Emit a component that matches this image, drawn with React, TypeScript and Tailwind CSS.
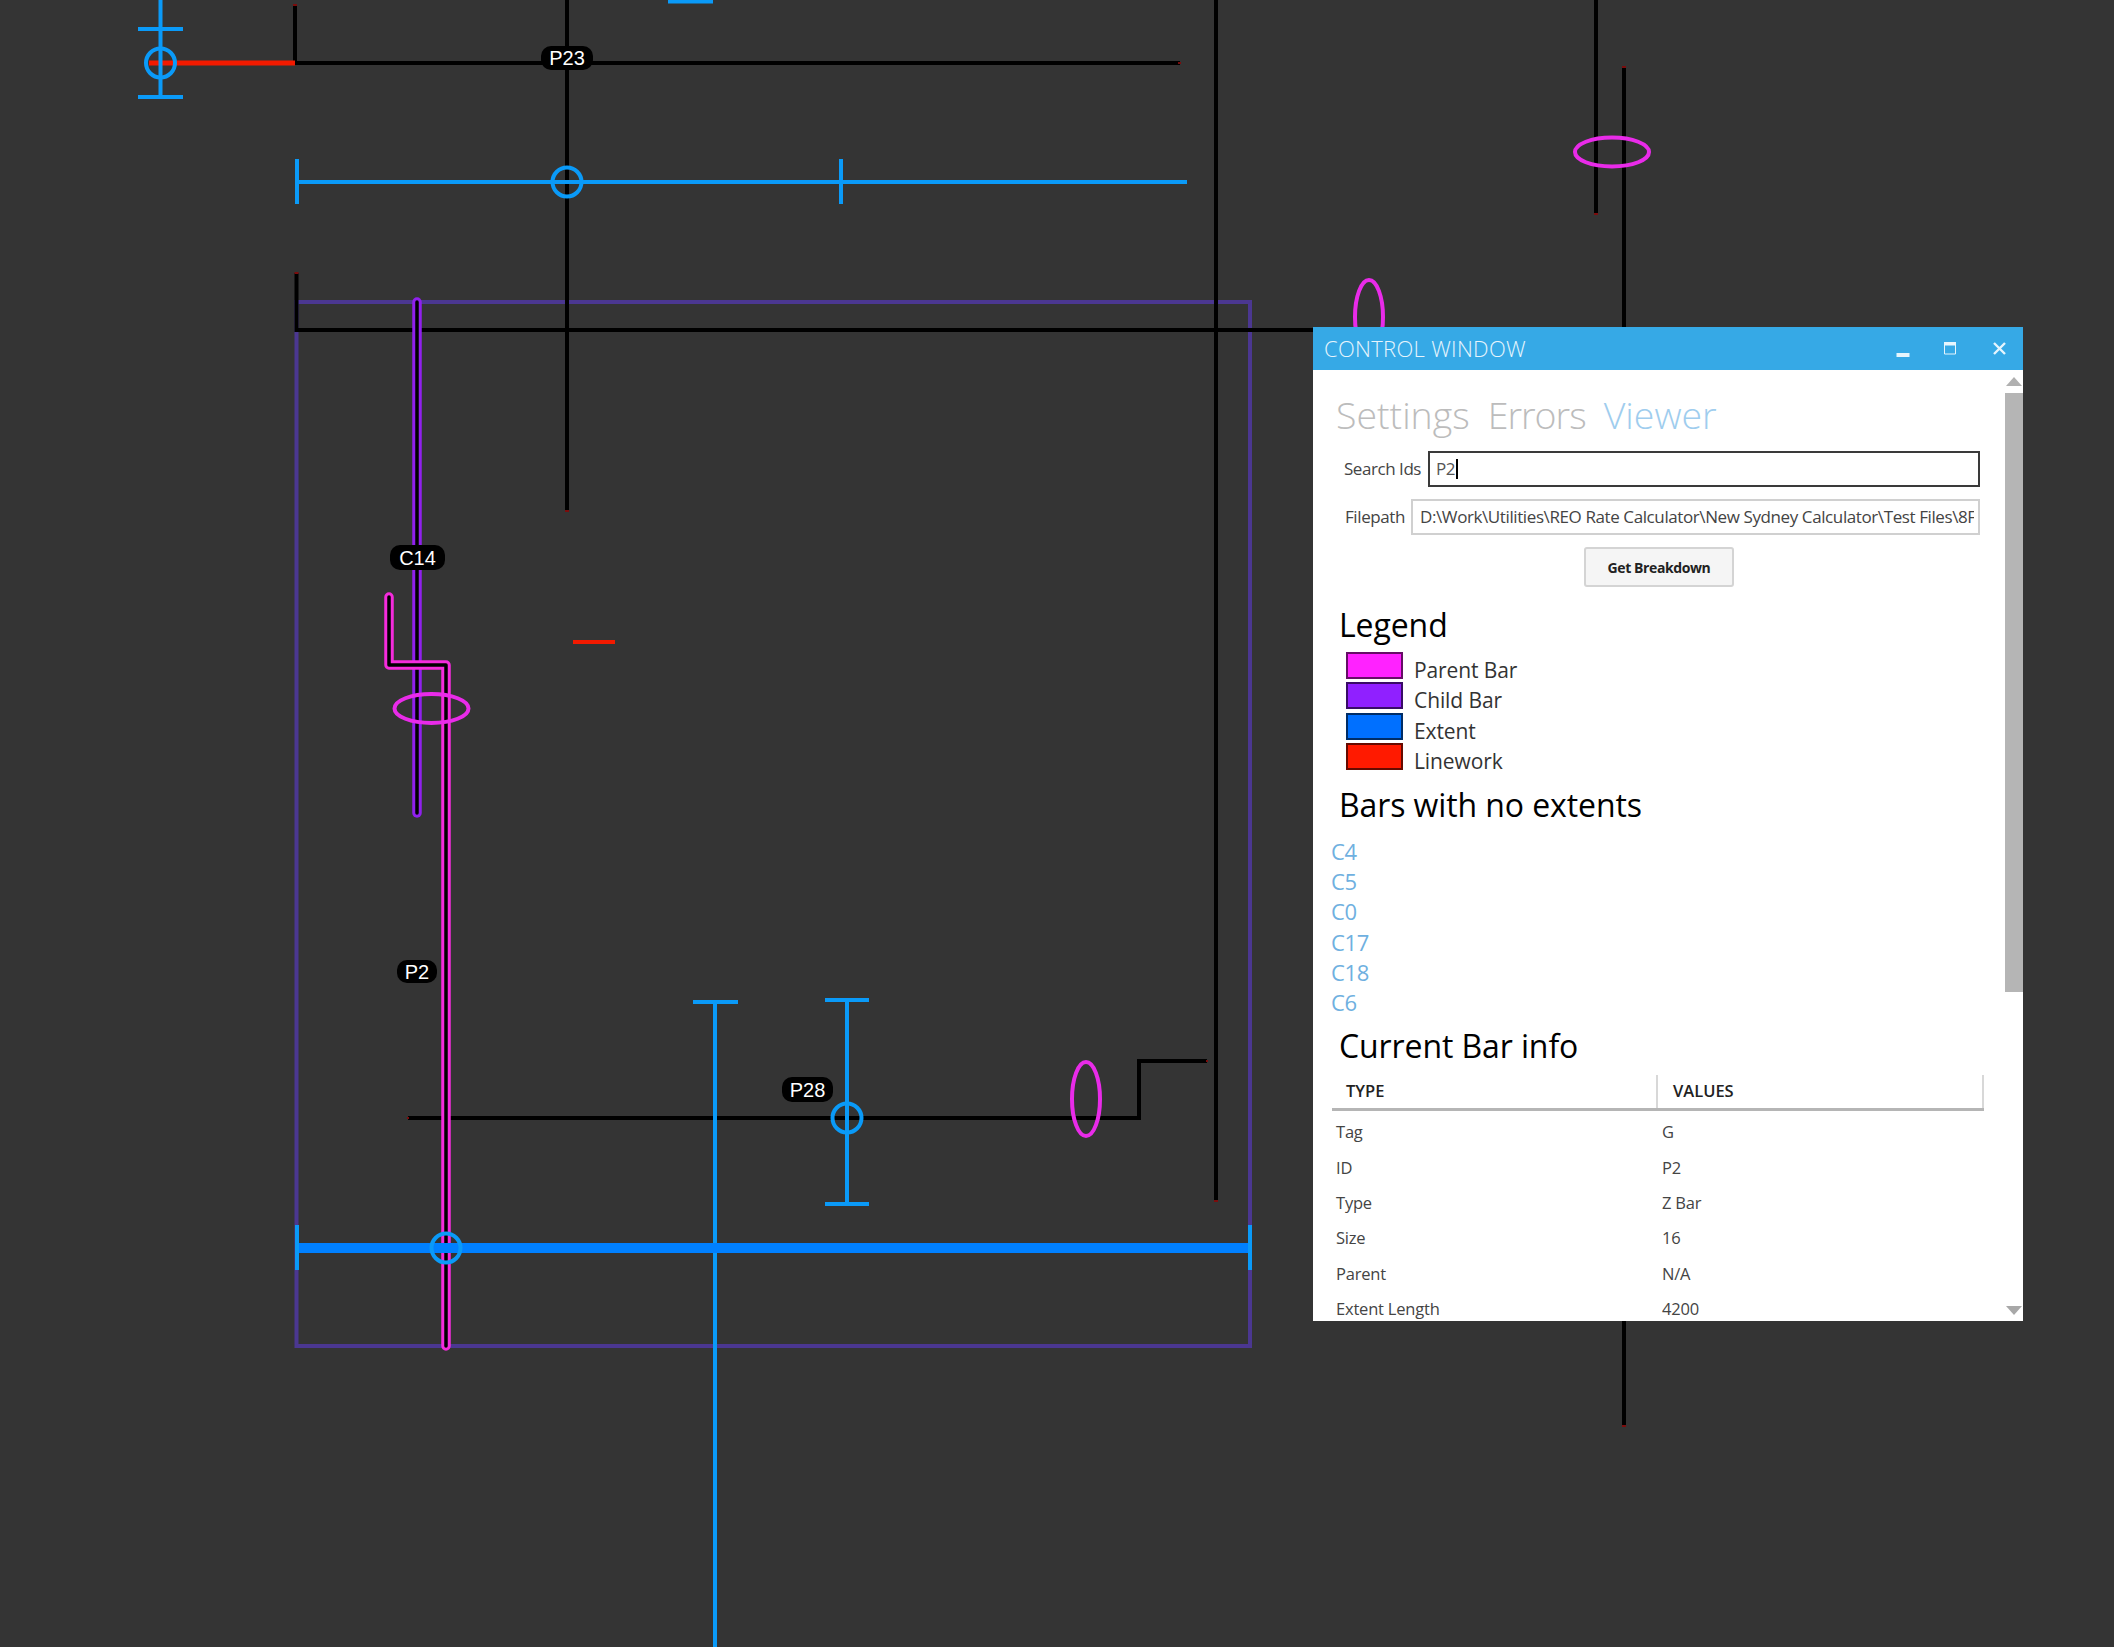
const FILE_PATH = 'D:\\Work\\Utilities\\REO Rate Calculator\\New Sydney Calculator\\Test Files\\8F';

const LEGEND = [
  { name: 'Parent Bar', swatch: 'bg-[#ff22ff]' },
  { name: 'Child Bar', swatch: 'bg-[#9020ff]' },
  { name: 'Extent', swatch: 'bg-[#0070ff]' },
  { name: 'Linework', swatch: 'bg-[#ff1a00]' },
];

const NO_EXTENTS = ['C4', 'C5', 'C0', 'C17', 'C18', 'C6'];

const BAR_INFO = [
  ['Tag', 'G'],
  ['ID', 'P2'],
  ['Type', 'Z Bar'],
  ['Size', '16'],
  ['Parent', 'N/A'],
  ['Extent Length', '4200'],
];

const BLUE = '#0a9af8';
const MAGENTA = '#e92be9';

function Drawing() {
  return (
    <svg className="absolute inset-0" width="2114" height="1647" viewBox="0 0 2114 1647" fill="none">
      {/* slab outline */}
      <rect x="296.5" y="302" width="953.5" height="1044" stroke="#4b3791" strokeWidth="4" />

      {/* linework */}
      <g stroke="#000" strokeWidth="4">
        <path d="M295 5V63H1180" />
        <path d="M567 0V511" />
        <path d="M296.5 273V330H1320" />
        <path d="M1216 0V1201" />
        <path d="M1596 0V214" />
        <path d="M1624 67V1426" />
        <path d="M408 1118H1139V1061H1207" />
      </g>
      <g fill="#7a0d0d">
        <rect x="293" y="4" width="4" height="2" />
        <rect x="294.5" y="272" width="4" height="2" />
        <rect x="565" y="510" width="4" height="2" />
        <rect x="1214" y="1200" width="4" height="2" />
        <rect x="1594" y="213" width="4" height="2" />
        <rect x="1622" y="66" width="4" height="2" />
        <rect x="1622" y="1425" width="4" height="2" />
        <rect x="1178" y="62" width="3" height="2" />
        <rect x="407" y="1117" width="2" height="2" />
        <rect x="1206" y="1060" width="2" height="2" />
      </g>

      {/* red linework */}
      <path d="M149 63H295" stroke="#f21a00" strokeWidth="5" />
      <path d="M573 642H615" stroke="#f21a00" strokeWidth="4" />

      {/* child bar */}
      <path d="M417 302V813" stroke="#9020ee" strokeWidth="9.5" strokeLinecap="round" />
      <path d="M417 302V813" stroke="#000" strokeWidth="3.5" strokeLinecap="round" />

      {/* parent bar */}
      <path d="M389 597V665H446V1346" stroke="#f52bdc" strokeWidth="9.5" strokeLinecap="round" strokeLinejoin="round" />
      <path d="M389 597V665H446V1346" stroke="#000" strokeWidth="3.5" strokeLinecap="round" strokeLinejoin="round" />

      {/* extents */}
      <g stroke={BLUE} strokeWidth="4">
        <path d="M160.5 0V97" />
        <path d="M138 29H183M138 97H183" />
        <path d="M297 182H1187" />
        <path d="M297 159V204M841 159V204" />
        <path d="M715 1002V1647" />
        <path d="M693 1002H738" />
        <path d="M847 1000V1204" />
        <path d="M825 1000H869M825 1204H869" />
      </g>
      <path d="M668 1.5H713" stroke={BLUE} strokeWidth="4" />
      <path d="M296 1248H1251" stroke="#0080ff" strokeWidth="10" />
      <path d="M297 1225V1270M1250 1225V1270" stroke={BLUE} strokeWidth="4" />

      <g stroke={BLUE} strokeWidth="4">
        <circle cx="160.5" cy="63" r="14.5" />
        <circle cx="567" cy="182" r="14.5" />
        <circle cx="847" cy="1118" r="14.5" />
        <circle cx="446" cy="1248" r="14.5" />
      </g>

      {/* laps */}
      <g stroke={MAGENTA} strokeWidth="4">
        <ellipse cx="431.5" cy="708.5" rx="37" ry="14.5" />
        <ellipse cx="1612" cy="152" rx="37" ry="14.5" />
        <ellipse cx="1369" cy="317" rx="14" ry="37" />
        <ellipse cx="1086" cy="1099" rx="14" ry="37" />
      </g>
    </svg>
  );
}

function ControlWindow() {
  return (
    <div className="absolute left-[1313px] top-[327px] flex h-[994px] w-[710px] flex-col overflow-hidden bg-white font-['Open_Sans',sans-serif]">
      <div className="flex h-[43px] shrink-0 items-center justify-between bg-[#36a9e6] pl-[11px] pr-[16px]">
        <span className="text-[22px] font-light tracking-[0.3px] text-[#e6f5fd]">CONTROL WINDOW</span>
        <div className="flex items-center gap-[33px] text-[#e6f5fd]">
          <svg width="14" height="14" viewBox="0 0 14 14" className="mt-[6px]">
            <rect x="0.5" y="8" width="13" height="4" fill="currentColor" />
          </svg>
          <svg width="14" height="14" viewBox="0 0 14 14" className="-mt-[2px] mr-[2px]">
            <path d="M1.5 4V13H12.5V4" fill="none" stroke="currentColor" />
            <rect x="1" y="1" width="12" height="3.5" fill="currentColor" />
          </svg>
          <svg width="15" height="15" viewBox="0 0 15 15">
            <path d="M2 2L13 13M13 2L2 13" stroke="currentColor" strokeWidth="2.4" />
          </svg>
        </div>
      </div>

      <div className="flex min-h-0 flex-1">
        <div className="flex w-[692px] flex-col *:shrink-0">
          <div className="mt-[20px] flex h-[50px] items-center gap-[18px] pl-[23px] text-[37.5px] font-light text-[#bcbcbc]">
            <span>Settings</span>
            <span className="tracking-[-1px]">Errors</span>
            <span className="text-[#9fcdee]">Viewer</span>
          </div>

          <div className="mt-[11px] flex h-[36px] items-center pl-[31px] text-[17px] tracking-[-0.45px] text-[#444]">
            <span className="w-[84px]">Search Ids</span>
            <div className="flex h-full w-[552px] items-center border-2 border-[#3a3a3a] pl-[6px] text-[#555]">
              P2
              <span className="ml-[1px] h-[20px] w-[2px] bg-black" />
            </div>
          </div>

          <div className="mt-[12px] flex h-[36px] items-center pl-[32px] text-[17px] tracking-[-0.4px] text-[#444]">
            <span className="w-[66px]">Filepath</span>
            <div className="flex h-full w-[569px] items-center border-2 border-[#d0d0d0] pl-[7px] pr-[4px]">
              <span className="overflow-hidden whitespace-nowrap text-[#444]">{FILE_PATH}</span>
            </div>
          </div>

          <button className="mt-[12px] h-[40px] w-[150px] self-center rounded-[3px] border-2 border-[#d4d4d4] bg-[#f5f5f5] text-[14px] font-bold tracking-[-0.4px] text-[#222]">
            Get Breakdown
          </button>

          <h2 className="mt-[16px] h-[44px] pl-[26px] text-[32px] leading-[44px] tracking-[-0.1px] text-black">Legend</h2>

          <div className="mt-[5px] flex flex-col pl-[33px]">
            {LEGEND.map(item => (
              <div key={item.name} className="flex h-[30.4px] items-start gap-[11px]">
                <span className={`h-[27px] w-[57px] border-2 border-black/60 ${item.swatch}`} />
                <span className="mt-[4px] text-[21px] leading-[28px] tracking-[-0.1px] text-[#333]">{item.name}</span>
              </div>
            ))}
          </div>

          <h2 className="mt-[9.5px] h-[44px] pl-[26px] text-[32px] leading-[44px] tracking-[-0.1px] text-black">Bars with no extents</h2>

          <div className="mt-[9px] flex flex-col pl-[18px]">
            {NO_EXTENTS.map(id => (
              <span key={id} className="h-[30.2px] text-[22px] leading-[30.2px] tracking-[-0.3px] text-[#6fb0e0]">{id}</span>
            ))}
          </div>

          <h2 className="mt-[7px] h-[44px] pl-[26px] text-[32px] leading-[44px] tracking-[-0.1px] text-black">Current Bar info</h2>

          <div className="ml-[19px] mt-[7px] w-[652px]">
            <div className="flex h-[36px] items-center border-b-[3px] border-[#b5b5b5] text-[16.5px] font-semibold text-[#222]">
              <span className="flex h-full w-[326px] items-center border-r-2 border-[#d8d8d8] pl-[14px]">TYPE</span>
              <span className="flex h-full flex-1 items-center border-r-2 border-[#d8d8d8] pl-[15px]">VALUES</span>
            </div>
            <div className="mt-[4px] flex flex-col text-[16.5px] tracking-[-0.2px] text-[#444]">
              {BAR_INFO.map(([label, value]) => (
                <div key={label} className="flex h-[35.3px] items-center">
                  <span className="w-[330px] pl-[4px]">{label}</span>
                  <span>{value}</span>
                </div>
              ))}
            </div>
          </div>
        </div>

        <div className="flex w-[18px] flex-col items-center pt-[7px]">
          <svg width="16" height="9" viewBox="0 0 16 9">
            <path d="M8 0L16 9H0Z" fill="#b0b0b0" />
          </svg>
          <div className="mt-[7px] h-[599px] w-full bg-[#b5b5b5]" />
          <svg width="16" height="9" viewBox="0 0 16 9" className="mb-[6px] mt-auto">
            <path d="M0 0H16L8 9Z" fill="#a8a8a8" />
          </svg>
        </div>
      </div>
    </div>
  );
}

export default function App() {
  return (
    <div className="relative h-[1647px] w-[2114px] overflow-hidden bg-[#343434] font-['Liberation_Sans',sans-serif]">
      <Drawing />

      <span className="absolute left-[541px] top-[46px] flex h-[24px] w-[52px] items-center justify-center rounded-[10px] bg-black text-[20px] text-white">P23</span>
      <span className="absolute left-[390px] top-[545px] flex h-[25px] w-[55px] items-center justify-center rounded-[10px] bg-black text-[20px] text-white">C14</span>
      <span className="absolute left-[397px] top-[960px] flex h-[23px] w-[40px] items-center justify-center rounded-[10px] bg-black text-[20px] text-white">P2</span>
      <span className="absolute left-[782px] top-[1077px] flex h-[25px] w-[51px] items-center justify-center rounded-[10px] bg-black text-[20px] text-white">P28</span>

      <ControlWindow />
    </div>
  );
}
